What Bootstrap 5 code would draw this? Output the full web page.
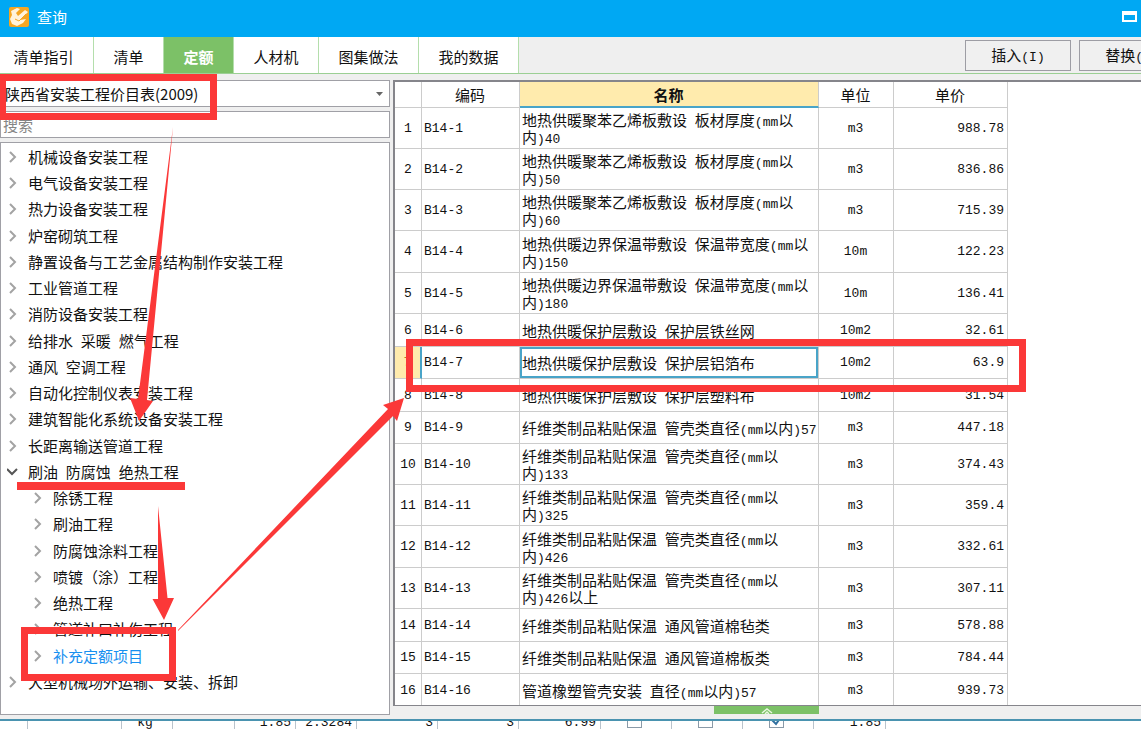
<!DOCTYPE html>
<html lang="zh-CN">
<head>
<meta charset="utf-8">
<meta name="viewport" content="width=device-width, initial-scale=1">
<title>查询</title>
<link href="https://cdn.jsdelivr.net/npm/bootstrap@5.3.0/dist/css/bootstrap.min.css" rel="stylesheet">
<style>
  body { font-family: "Noto Sans CJK SC", sans-serif; font-size: 15px; line-height: 18px; color: #111; background: #efefef; }
  .latin { font-family: "Liberation Mono", "Noto Sans CJK SC", monospace; font-size: 13px; }
  span.latin { line-height: 8px; }
  .window { height: 100vh; }
  .titlebar { height: 37px; background: #00a8f3; color: #fff; padding: 0 4px 4px 8px; }
  .toolbar { height: 37px; border-bottom: 1px solid #9bcf94; }
  .tabs .nav-link { color: #111; background: #fff; border-radius: 0; border-right: 1px solid #b4deac; padding: 3px 0 0; display: flex; align-items: center; justify-content: center; height: 36px; }
  .tabs .nav-link.active { background: #7cc167; color: #fff; font-weight: 700; }
  .tabs .w-a { width: 94px; padding-right: 6px; } .w-b { width: 70px; } .w-d { width: 85px; } .w-e { width: 100px; }
  .actions { width: 176px; }
  .actions .btn { width: 106px; height: 31px; border: 1px solid #9d9da4; border-radius: 0; background: #f0f0f0; color: #111; font-size: 15px; line-height: 18px; padding: 0; }
  .main { padding-top: 6px; }
  .side { width: 390px; margin-bottom: 4px; }
  .side .form-select, .side .form-control { border: 1px solid #a0a0a6; border-radius: 0; background-color: #fff; font-size: 15px; line-height: 18px; height: 27px; padding: 0 2px; color: #111; }
  .side .form-select { padding-left: 4px; appearance: none; background-image: none; }
  .side .form-control::placeholder { color: #858585; opacity: 1; }
  .caret { right: 7px; top: 12px; }
  .tree { border: 1px solid #a0a0a6; background: #fff; padding-top: 1px; overflow: hidden; }
  .tree a { display: flex; align-items: center; height: 26px; padding-left: 6px; color: #111; text-decoration: none; white-space: nowrap; }
  .tree li:nth-child(4n) a { height: 27px; }
  .tree a.sub { padding-left: 31px; }
  .tree a.picked { color: #1890f0; }
  .tree svg { width: 11px; height: 12px; margin-right: 10px; fill: none; stroke: #a3a3a3; stroke-width: 2; flex: none; }
  .tree svg.open { stroke: #555; }
  .sheet { border: 1px solid #85858b; border-width: 2px 0 1px 2px; background: #fff; overflow: hidden; margin-bottom: 13px; margin-left: 3px; }
  .grid { table-layout: fixed; width: 613px; border-collapse: separate; border-spacing: 0; }
  .grid th, .grid td { border-right: 1px solid #ccc; border-bottom: 1px solid #ccc; padding: 0 3px 0 2px; vertical-align: middle; line-height: 17px; }
  .grid th { height: 26px; font-weight: 400; text-align: center; }
  .grid tbody th { padding: 0; }
  .grid thead th.sel { font-weight: 700; background: #ffebad; border-bottom: 2px solid #49a4c8; }
  .grid tr.two > * { height: 41px; }
  .grid tr.two:nth-child(4n) > * { height: 42px; }
  .grid tr.one > * { height: 32px; }
  .grid tr.one:nth-child(even) > * { height: 33px; }
  .grid td.name { padding-right: 0; }
  .grid tr.current th { background: #ffebad; border-right: 2px solid #49a4c8; color: #b07a30; }
  .grid tr.current td.name { box-shadow: inset 0 0 0 2px #49a4c8; }
  .grabber { left: 324px; width: 105px; height: 8px; bottom: 5px; background: #7cc167; }
  .under { height: 10px; border-top: 2px solid #4a93b0; background: #fff; }
  .under .cell { height: 8px; border-right: 1px solid #b9c3cc; flex: none; display: flex; align-items: flex-end; overflow: hidden; padding-right: 4px; }
  .under .cell span { line-height: 12px; }
  .under input { width: 15px; height: 15px; margin: 0 0 1px; flex: none; appearance: none; border: 1px solid #8a9aa8; background: #fff; }
  .under input:checked { background: #fff url("data:image/svg+xml,%3Csvg xmlns='http://www.w3.org/2000/svg' viewBox='0 0 13 13'%3E%3Cpath d='M2 6l4 4 5-7' fill='none' stroke='%232f6f9f' stroke-width='2'/%3E%3C/svg%3E"); }
  .marks { left: 0; top: 0; width: 1141px; height: 729px; pointer-events: none; }
</style>
<script src="https://cdn.jsdelivr.net/npm/bootstrap@5.3.0/dist/js/bootstrap.bundle.min.js"></script>
</head>
<body class="overflow-hidden">
<div class="window d-flex flex-column position-relative overflow-hidden">
  <header class="titlebar d-flex align-items-center flex-shrink-0">
    <svg width="21" height="21" viewBox="0 0 21 21" aria-hidden="true"><rect x="1" y="1" width="20" height="20" rx="2" fill="#f5a623"/><path d="M3 5l6-3 3 1-4 4 2 3 7-6 3 2-8 8 6-1-3 4-6 3-5-2-2-5 2-4z" fill="#fff3dc"/><path d="M7 13l4 2 7-7" fill="none" stroke="#f5a623" stroke-width="1"/></svg>
    <span class="ms-2 lh-1">查询</span>
    <svg class="ms-auto" width="15" height="11" viewBox="0 0 15 11" aria-hidden="true"><path d="M1 1h13v9H1z" fill="none" stroke="#fff" stroke-width="2"/><path d="M0 0h15v4H0z" fill="#fff"/></svg>
  </header>
  <div class="toolbar d-flex flex-shrink-0">
    <nav class="tabs nav flex-nowrap text-nowrap">
      <a class="nav-link w-a" href="#">清单指引</a>
      <a class="nav-link w-b" href="#">清单</a>
      <a class="nav-link w-b active" href="#">定额</a>
      <a class="nav-link w-d" href="#">人材机</a>
      <a class="nav-link w-e" href="#">图集做法</a>
      <a class="nav-link w-e" href="#">我的数据</a>
    </nav>
    <div class="actions ms-auto d-flex gap-2 overflow-hidden align-items-center">
      <button class="btn flex-shrink-0" type="button">插入<span class="latin">(I)</span></button>
      <button class="btn flex-shrink-0" type="button">替换<span class="latin">(R)</span></button>
    </div>
  </div>
  <main class="main d-flex flex-grow-1" style="min-height:0">
    <section class="side d-flex flex-column flex-shrink-0 gap-1">
      <div class="position-relative">
        <select class="form-select" aria-label="定额库"><option>陕西省安装工程价目表(2009)</option></select>
        <svg class="caret position-absolute" width="7" height="4" viewBox="0 0 7 4" aria-hidden="true"><path d="M0 0h7L3.500 4z" fill="#666"/></svg>
      </div>
      <input class="form-control" type="text" placeholder="搜索" aria-label="搜索">
      <ul class="tree list-unstyled m-0 flex-grow-1" id="tree"></ul>
    </section>
    <section class="position-relative d-flex flex-grow-1" style="min-width:0">
      <div class="sheet flex-grow-1">
        <table class="grid">
          <colgroup><col style="width:27px"><col style="width:98px"><col style="width:299px"><col style="width:75px"><col style="width:114px"></colgroup>
          <thead><tr><th></th><th>编码</th><th class="sel">名称</th><th>单位</th><th>单价</th></tr></thead>
          <tbody id="rows"></tbody>
        </table>
      </div>
      <div class="grabber position-absolute d-flex justify-content-center align-items-end"><svg width="12" height="6" viewBox="0 0 12 6" aria-hidden="true"><path d="M1 5l5-4 5 4M4 6l2-2 2 2" fill="none" stroke="#e8f7e0" stroke-width="1.500"/></svg></div>
    </section>
  </main>
  <footer class="under d-flex flex-shrink-0 overflow-hidden" id="under"></footer>

  <svg class="marks position-absolute" viewBox="0 0 1141 729" aria-hidden="true">
    <g fill="none" stroke="#fb3838" stroke-width="7">
      <path d="M2.500 77.500H213.500V116.500H2.500z"/>
      <path d="M409.500 342.500H1022.500V388.500H409.500z"/>
      <path d="M24.500 630.500H172.500V677.500H24.500z"/>
    </g>
    <g fill="#fb3838">
      <path d="M17 482H185V490H17z"/>
      <path d="M173 127L138 399L130 398L139 421L153 401L147 400z"/>
      <path d="M158 506L167.500 598H174L164 620L152.500 599H158z"/>
      <path d="M178 630L388 409L383 405L404 398L397 421L393 416L178 631z"/>
    </g>
  </svg>
</div>
<script>
  // Runs of Latin characters are set in the narrower monospaced face.
  const latin = t => t.replace(/[\x20-\x7e]+/g, s => `<span class="latin">${s}</span>`);

  const tree = ['机械设备安装工程','电气设备安装工程','热力设备安装工程','炉窑砌筑工程','静置设备与工艺金属结构制作安装工程','工业管道工程','消防设备安装工程','给排水 采暖 燃气工程','通风 空调工程','自动化控制仪表安装工程','建筑智能化系统设备安装工程','长距离输送管道工程','v刷油 防腐蚀 绝热工程','>除锈工程','>刷油工程','>防腐蚀涂料工程','>喷镀（涂）工程','>绝热工程','>管道补口补伤工程','>补充定额项目','大型机械场外运输、安装、拆卸'];
  document.getElementById('tree').innerHTML = tree.map(t => {
    const open = t[0] === 'v', sub = t[0] === '>', name = open || sub ? t.slice(1) : t;
    const cls = (sub ? 'sub ' : '') + (name === '补充定额项目' ? 'picked' : '');
    return `<li><a href="#" class="${cls}"><svg class="${open ? 'open' : ''}" viewBox="0 0 11 12"><path d="${open ? 'M0 3l5 5 5-5' : 'M3 1l5 5-5 5'}"/></svg><span>${latin(name)}</span></a></li>`;
  }).join('');

  const a = '地热供暖聚苯乙烯板敷设 板材厚度(mm以内)', b = '地热供暖边界保温带敷设 保温带宽度(mm以内)', c = '地热供暖保护层敷设 保护层', d = '纤维类制品粘贴保温 ', e = d + '管壳类直径(mm以内)';
  const rows = [[a+'40','m3','988.78',2],[a+'50','m3','836.86',2],[a+'60','m3','715.39',2],[b+'150','10m','122.23',2],[b+'180','10m','136.41',2],[c+'铁丝网','10m2','32.61',1],[c+'铝箔布','10m2','63.9',1],[c+'塑料布','10m2','31.54',1],[e+'57','m3','447.18',1],[e+'133','m3','374.43',2],[e+'325','m3','359.4',2],[e+'426','m3','332.61',2],[e+'426以上','m3','307.11',2],[d+'通风管道棉毡类','m3','578.88',1],[d+'通风管道棉板类','m3','784.44',1],['管道橡塑管壳安装 直径(mm以内)57','m3','939.73',1]];
  document.getElementById('rows').innerHTML = rows.map(([n, u, p, lines], i) =>
    `<tr class="${lines === 2 ? 'two' : 'one'} ${i === 6 ? 'current' : ''}"><th class="latin">${i + 1}</th><td class="latin">B14-${i + 1}</td><td class="name">${latin(n)}</td><td class="latin text-center">${u}</td><td class="latin text-end">${p}</td></tr>`).join('');

  // Sliver of the estimate sheet that shows below the dialog: [width, text, state].
  const cells = [[28],[94],[51,'kg'],[62],[61,'1.85'],[61,'2.3284'],[81,'3'],[81,'3'],[82,'6.99'],[71,'',0],[71,'',0],[71,'',1],[72,'1.85']];
  document.getElementById('under').innerHTML = cells.map(([w, t, box]) =>
    `<div class="cell latin ${box !== undefined || t === 'kg' ? 'justify-content-center' : 'justify-content-end'}" style="width:${w}px">${box !== undefined ? `<input type="checkbox" aria-label="选项" ${box ? 'checked' : ''}>` : `<span>${t || ''}</span>`}</div>`).join('');
</script>
</body>
</html>
